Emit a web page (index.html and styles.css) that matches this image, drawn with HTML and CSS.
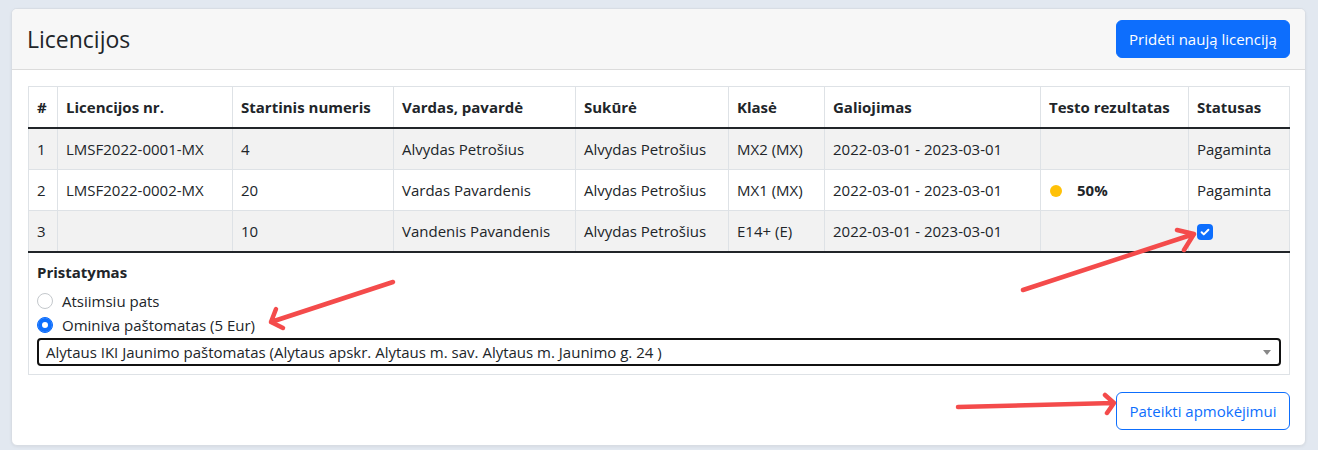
FILE: index.html
```html
<!DOCTYPE html>
<html lang="lt">

<head>
  <meta charset="UTF-8">
  <title>Licencijos</title>
  <link rel="stylesheet" href="styles.css">
</head>

<body>

  <div class="card">
    <div class="card-header">
      <h4>Licencijos</h4>
      <button class="btn btn-primary">Pridėti naują licenciją</button>
    </div>

    <div class="card-body">
      <table class="table">
        <thead>
          <tr>
            <th class="c-nr">#</th>
            <th class="c-lic">Licencijos nr.</th>
            <th class="c-start">Startinis numeris</th>
            <th class="c-name">Vardas, pavardė</th>
            <th class="c-made">Sukūrė</th>
            <th class="c-class">Klasė</th>
            <th class="c-valid">Galiojimas</th>
            <th class="c-test">Testo rezultatas</th>
            <th class="c-status">Statusas</th>
          </tr>
        </thead>
        <tbody>
          <tr class="odd">
            <td>1</td>
            <td>LMSF2022-0001-MX</td>
            <td>4</td>
            <td>Alvydas Petrošius</td>
            <td>Alvydas Petrošius</td>
            <td>MX2 (MX)</td>
            <td>2022-03-01 - 2023-03-01</td>
            <td></td>
            <td>Pagaminta</td>
          </tr>
          <tr>
            <td>2</td>
            <td>LMSF2022-0002-MX</td>
            <td>20</td>
            <td>Vardas Pavardenis</td>
            <td>Alvydas Petrošius</td>
            <td>MX1 (MX)</td>
            <td>2022-03-01 - 2023-03-01</td>
            <td><span class="dot"></span><b>50%</b></td>
            <td>Pagaminta</td>
          </tr>
          <tr class="odd">
            <td>3</td>
            <td></td>
            <td>10</td>
            <td>Vandenis Pavandenis</td>
            <td>Alvydas Petrošius</td>
            <td>E14+ (E)</td>
            <td>2022-03-01 - 2023-03-01</td>
            <td></td>
            <td>
              <span class="check">
                <svg width="16" height="16" viewBox="0 0 16 16"><path d="M4.6 8.2l2.2 2.2 4.6-4.6" fill="none" stroke="#fff" stroke-width="2" stroke-linecap="round" stroke-linejoin="round"/></svg>
              </span>
            </td>
          </tr>
        </tbody>
        <tfoot>
          <tr>
            <td colspan="9">
              <div class="label">Pristatymas</div>
              <div class="radio"><span class="radio-box"></span>Atsiimsiu pats</div>
              <div class="radio"><span class="radio-box checked"></span>Ominiva paštomatas (5 Eur)</div>
              <div class="select">
                <span>Alytaus IKI Jaunimo paštomatas (Alytaus apskr. Alytaus m. sav. Alytaus m. Jaunimo g. 24 )</span>
                <span class="caret"></span>
              </div>
            </td>
          </tr>
        </tfoot>
      </table>

      <div class="actions">
        <button class="btn btn-outline">Pateikti apmokėjimui</button>
      </div>
    </div>
  </div>

  <!-- annotation arrows -->
  <svg class="arrows" width="1318" height="450" viewBox="0 0 1318 450">
    <g fill="none" stroke="#f44b4b" stroke-width="4.5" stroke-linecap="round" stroke-linejoin="round">
      <path d="M1023 290 L1194 234 M1177 230 L1194 234 L1184 250"/>
      <path d="M393 282 L271 322 M276 309 L271 322 L283 328"/>
      <path d="M958 407 L1114 403 M1105 395 L1114 403 L1107 413"/>
    </g>
  </svg>

</body>
</html>
```

FILE: styles.css
```css
body { margin: 0; padding: 8px 12px 6px 11px; background: #e2e8f0; font-family: "Open Sans", "Noto Sans", sans-serif; font-size: 15px; line-height: 24px; color: #212529; }

.card { background: #fff; border: 1px solid #d8dde4; border-radius: 6px; box-shadow: 0 1px 3px rgba(0,0,0,0.06); overflow: hidden; }
.card-header { display: flex; justify-content: space-between; align-items: center; padding: 11px 15px 11px 15px; background: #f7f7f7; border-bottom: 1px solid #dcdcdc; }
.card-header h4 { margin: 0; font-size: 23px; font-weight: 500; line-height: 30px; }
.card-body { padding: 16px 15px 15px 16px; }

.btn { font-family: inherit; font-size: 15px; line-height: 24px; padding: 6px 12px; border-radius: 6px; cursor: pointer; width: 174px; }
.btn-primary { background: #0d6efd; color: #fff; border: 1px solid #0d6efd; }
.btn-outline { background: #fff; color: #0d6efd; border: 1px solid #0d6efd; }

.table { width: 100%; border-collapse: collapse; table-layout: fixed; }
.table th, .table td { border: 1px solid #dee2e6; padding: 8px 8px; text-align: left; vertical-align: middle; white-space: nowrap; }
.table th { font-weight: 700; }
.table thead th { border-bottom: 2px solid #212529; }
.table tbody tr.odd td { background: #f2f2f2; }
.table tfoot td { border-top: 2px solid #212529; padding: 7px 8px 8px 8px; }

.c-nr { width: 12px; }
.c-lic { width: 158px; }
.c-start { width: 144px; }
.c-name { width: 165px; }
.c-made { width: 136px; }
.c-class { width: 79px; }
.c-valid { width: 199px; }
.c-test { width: 131px; }
.c-status { width: auto; }

.dot { display: inline-block; width: 12px; height: 12px; border-radius: 50%; background: #ffc107; margin: 0 15px 0 1px; vertical-align: -1px; }
.check { display: inline-flex; width: 16px; height: 16px; background: #0d6efd; border-radius: 4px; vertical-align: -3px; }

.label { font-weight: 700; margin-bottom: 5px; }
.radio { display: flex; align-items: center; }
.radio-box { width: 14px; height: 14px; border: 1px solid #c4c8cc; border-radius: 50%; margin-right: 9px; box-sizing: content-box; }
.radio-box.checked { background: #0d6efd; border-color: #0d6efd; box-shadow: inset 0 0 0 4px #0d6efd, inset 0 0 0 8px #fff; }
.select { display: flex; justify-content: space-between; align-items: center; height: 24px; margin-top: 1px; border: 2px solid #111; border-radius: 4px; padding: 0 8px 0 7px; }
.caret { width: 0; height: 0; border-left: 4px solid transparent; border-right: 4px solid transparent; border-top: 5px solid #888; }

.actions { display: flex; justify-content: flex-end; margin-top: 17px; }

.arrows { position: absolute; left: 0; top: 0; pointer-events: none; }
```
